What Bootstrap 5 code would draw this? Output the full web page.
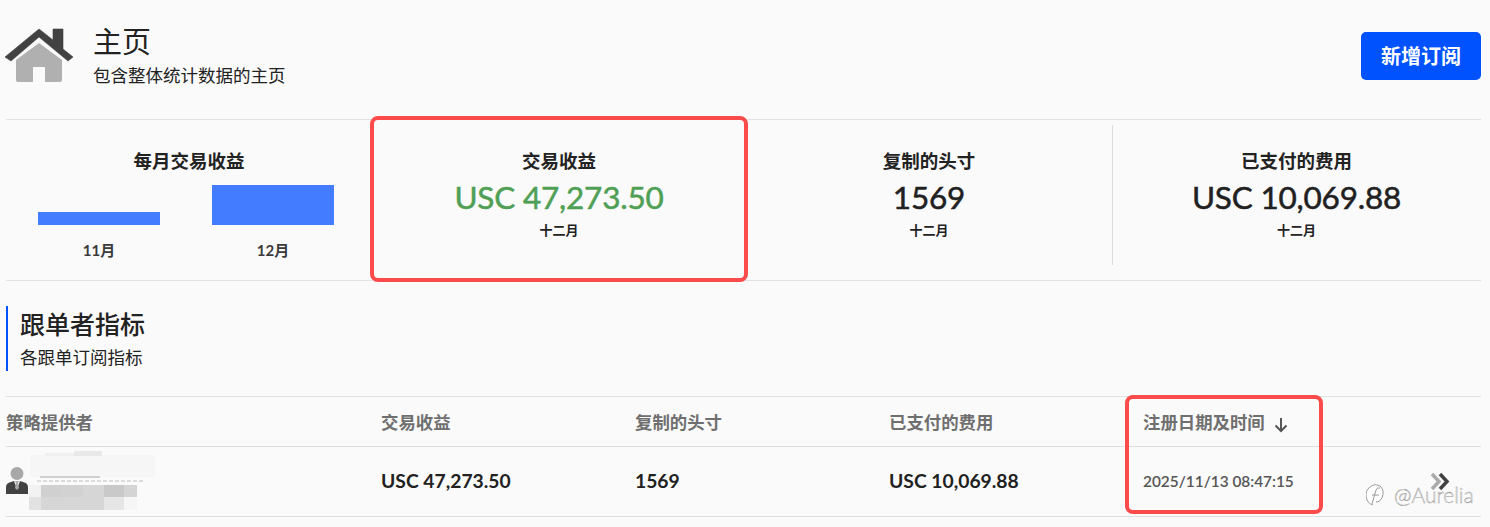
<!DOCTYPE html>
<html lang="zh">
<head>
<meta charset="utf-8">
<title>主页</title>
<link href="https://cdn.jsdelivr.net/npm/bootstrap@5.3.0/dist/css/bootstrap.min.css" rel="stylesheet">
<style>
html,body{height:527px;overflow:hidden}
body{background:#fafafa;color:#212121;font-family:"Lato","Noto Sans CJK SC",sans-serif;position:relative}
.shell{margin:0 9px 0 6px}
.top-head{height:120px;border-bottom:1px solid #e2e2e2;padding-top:25px}
.home-ico{width:68px;height:60px;flex:none;margin-left:-1px}
.ttl{font-size:29px;line-height:34px;font-weight:400;margin:0 0 6px;color:#222}
.sub{font-size:17.500px;line-height:22px;color:#222}
.head-text{margin-left:20px}
.btn-new{background:#0052ff;border:0;border-radius:5px;color:#fff;font-weight:700;font-size:20px;line-height:24px;width:120px;height:48px;margin-top:7px;padding:0}
.btn-new:hover{background:#0052ff;color:#fff}
.stats{height:161px;border-bottom:1px solid #e2e2e2}
.stat{width:25%;padding-top:29px;text-align:center}
.stat-first{width:366px}
.stat-mid{width:374px}
.stat-third{width:366px}
.stat-last{flex:1;position:relative}
.stat-last::before{content:"";position:absolute;left:0;top:5px;bottom:15px;border-left:1px solid #dcdcdc}
.stat-label{font-size:18.500px;line-height:24px;font-weight:700;color:#222}
.stat-val{font-size:31.500px;line-height:40px;margin-top:4px;color:#212121;-webkit-text-stroke:.5px currentColor;letter-spacing:-.2px}
.stat-val.pos{color:#4f9f55}
.stat-mon{font-size:13px;line-height:18px;margin-top:4px;font-weight:600;color:#222}
.bars{display:flex;justify-content:center;gap:52px;align-items:flex-end;height:44px;margin-top:8px;padding-right:6px}
.bar-box{width:122px;background:#437cff}
.bar-a{height:13px}
.bar-b{height:40px}
.bar-labs{display:flex;justify-content:center;gap:52px;margin-top:16px;padding-right:6px}
.bar-labs span{width:122px;font-size:15px;line-height:18px;font-weight:700;color:#3a3a3a}
.sect{margin-top:25px;height:65px;border-left:2px solid #0052ff;padding-left:12px}
.sect-t{font-size:25px;line-height:30px;font-weight:500;margin:0 0 8px;padding-top:3px;color:#222}
.sect-s{font-size:17.500px;line-height:22px;color:#222}
.tbl-wrap{margin-top:25px}
.tbl{--bs-table-bg:transparent;table-layout:fixed;width:100%;margin:0;border-top:1px solid #e0e0e0}
.tbl th,.tbl td{padding:0;border-bottom:1px solid #dedede;vertical-align:middle}
.tbl th{height:50px;padding-top:4px;font-size:17.400px;font-weight:700;color:#6f6f6f}
.tbl td{height:70px;font-size:19.300px;font-weight:700;color:#212121}
.tbl td.when{font-size:15.400px;font-weight:600;color:#555}
.tbl .c1{width:375px}.tbl .c2,.tbl .c3,.tbl .c4{width:254px}
.who{display:flex;align-items:center}
.avatar{width:22px;height:27px;flex:none;margin-top:-2px}
.blurred{width:126px;height:60px;margin-left:1px;flex:none;margin-top:-2px}
.red{position:absolute;border:4px solid #fb4b4b;border-radius:8px;pointer-events:none}
.red-a{left:370px;top:116px;width:378px;height:166px}
.red-b{left:1125px;top:395px;width:198px;height:119px}
.chevs{position:absolute;left:1430px;top:472px}
.wmark{position:absolute;left:1366px;top:482px;font-size:21px;line-height:26px;color:#fff;font-weight:300;-webkit-text-stroke:.4px #8c8c8c;display:flex;align-items:center;gap:9px}
.wmark-ico{width:19px;height:22px}
</style>
</head>
<body>
<div class="shell">
  <header class="top-head d-flex justify-content-between align-items-start">
    <div class="d-flex">
      <svg class="home-ico" viewBox="5 25 68 60" aria-hidden="true">
        <path d="M39 43 62 60V80a2 2 0 0 1-2 2H45V67H33V82H18a2 2 0 0 1-2-2V60Z" fill="#b0b0b0"/>
        <path d="M5 57 39 29 53 40V29H63V49L73 57 68 61 39 37 11 61Z" fill="#424242" stroke="#424242" stroke-width=".6" stroke-linejoin="round"/>
      </svg>
      <div class="head-text">
        <h1 class="ttl">主页</h1>
        <div class="sub">包含整体统计数据的主页</div>
      </div>
    </div>
    <button type="button" class="btn btn-new">新增订阅</button>
  </header>

  <section class="stats d-flex">
    <div class="stat stat-first">
      <div class="stat-label">每月交易收益</div>
      <div class="bars"><div class="bar-box bar-a"></div><div class="bar-box bar-b"></div></div>
      <div class="bar-labs"><span>11月</span><span>12月</span></div>
    </div>
    <div class="stat stat-mid">
      <div class="stat-label">交易收益</div>
      <div class="stat-val pos">USC 47,273.50</div>
      <div class="stat-mon">十二月</div>
    </div>
    <div class="stat stat-third">
      <div class="stat-label">复制的头寸</div>
      <div class="stat-val">1569</div>
      <div class="stat-mon">十二月</div>
    </div>
    <div class="stat stat-last">
      <div class="stat-label">已支付的费用</div>
      <div class="stat-val">USC 10,069.88</div>
      <div class="stat-mon">十二月</div>
    </div>
  </section>

  <section class="sect">
    <h2 class="sect-t">跟单者指标</h2>
    <div class="sect-s">各跟单订阅指标</div>
  </section>

  <div class="tbl-wrap">
    <table class="table tbl">
      <thead>
        <tr>
          <th class="c1">策略提供者</th><th class="c2">交易收益</th><th class="c3">复制的头寸</th><th class="c4">已支付的费用</th>
          <th>注册日期及时间
            <svg width="16" height="18" viewBox="0 0 16 18" class="ms-1 align-middle" aria-hidden="true"><path d="M8 2V15M2.500 9.500 8 15l5.500-5.500" fill="none" stroke="#555" stroke-width="2"/></svg>
          </th>
        </tr>
      </thead>
      <tbody>
        <tr>
          <td>
            <div class="who">
              <svg class="avatar" viewBox="0 0 22 27" aria-hidden="true">
                <circle cx="11" cy="6.500" r="6.500" fill="#a8a8a8"/>
                <path d="M0 27V20Q0 16 5 15L8 14 11 22 14 14 17 15Q22 16 22 20V27Z" fill="#424242"/>
                <path d="M9 14h4l-1 2 1 5-2 2-2-2 1-5Z" fill="#a8a8a8"/>
              </svg>
              <svg class="blurred" viewBox="0 0 126 60" aria-hidden="true">
                <rect x="1" y="4" width="125" height="22" fill="#f6f6f6"/>
                <rect x="16" y="2" width="30" height="3" fill="#efefef"/>
                <rect x="45" y="0" width="28" height="5" fill="#e8e8e8"/>
                <rect x="11" y="25" width="60" height="2" fill="#cfcfcf"/>
                <rect x="0" y="34" width="12" height="12" fill="#f2f2f2"/>
                <rect x="12" y="34" width="21" height="12" fill="#d0d0d0"/>
                <rect x="33" y="34" width="21" height="12" fill="#d2d2d2"/>
                <rect x="54" y="34" width="21" height="12" fill="#d6d6d6"/>
                <rect x="75" y="34" width="20" height="12" fill="#c9c9c9"/>
                <rect x="95" y="34" width="13" height="12" fill="#d4d4d4"/>
                <rect x="0" y="46" width="12" height="13" fill="#e2e2e2"/>
                <rect x="12" y="46" width="63" height="13" fill="#d6d6d6"/>
                <rect x="75" y="46" width="20" height="13" fill="#e6e6e6"/>
                <rect x="95" y="46" width="13" height="13" fill="#f6f6f6"/>
                <path d="M8 30H114" stroke="#bdbdbd" stroke-dasharray="4 2"/>
              </svg>
            </div>
          </td>
          <td>USC 47,273.50</td>
          <td>1569</td>
          <td>USC 10,069.88</td>
          <td class="when">2025/11/13 08:47:15</td>
        </tr>
      </tbody>
    </table>
  </div>
</div>

<div class="red red-a"></div>
<div class="red red-b"></div>
<svg class="chevs" width="22" height="20" viewBox="0 0 22 20" aria-hidden="true">
  <path d="M2 2 9 9.500 2 17" fill="none" stroke="#aaa" stroke-width="3.500"/>
  <path d="M10 2 17 9.500 10 17" fill="none" stroke="#424242" stroke-width="3.500"/>
</svg>
<div class="wmark">
  <svg class="wmark-ico" viewBox="0 0 19 22" aria-hidden="true">
    <path d="M7 21A9 10 0 0 1 4 3Q9-1 14 2 19 6 16 14 13 19 10 18M6 20 10 6Q11 3 14 4M6 11H13" fill="#fff" stroke="#9a9a9a" stroke-width="1"/>
  </svg>
  <span>@Aurelia</span>
</div>
</body>
</html>
